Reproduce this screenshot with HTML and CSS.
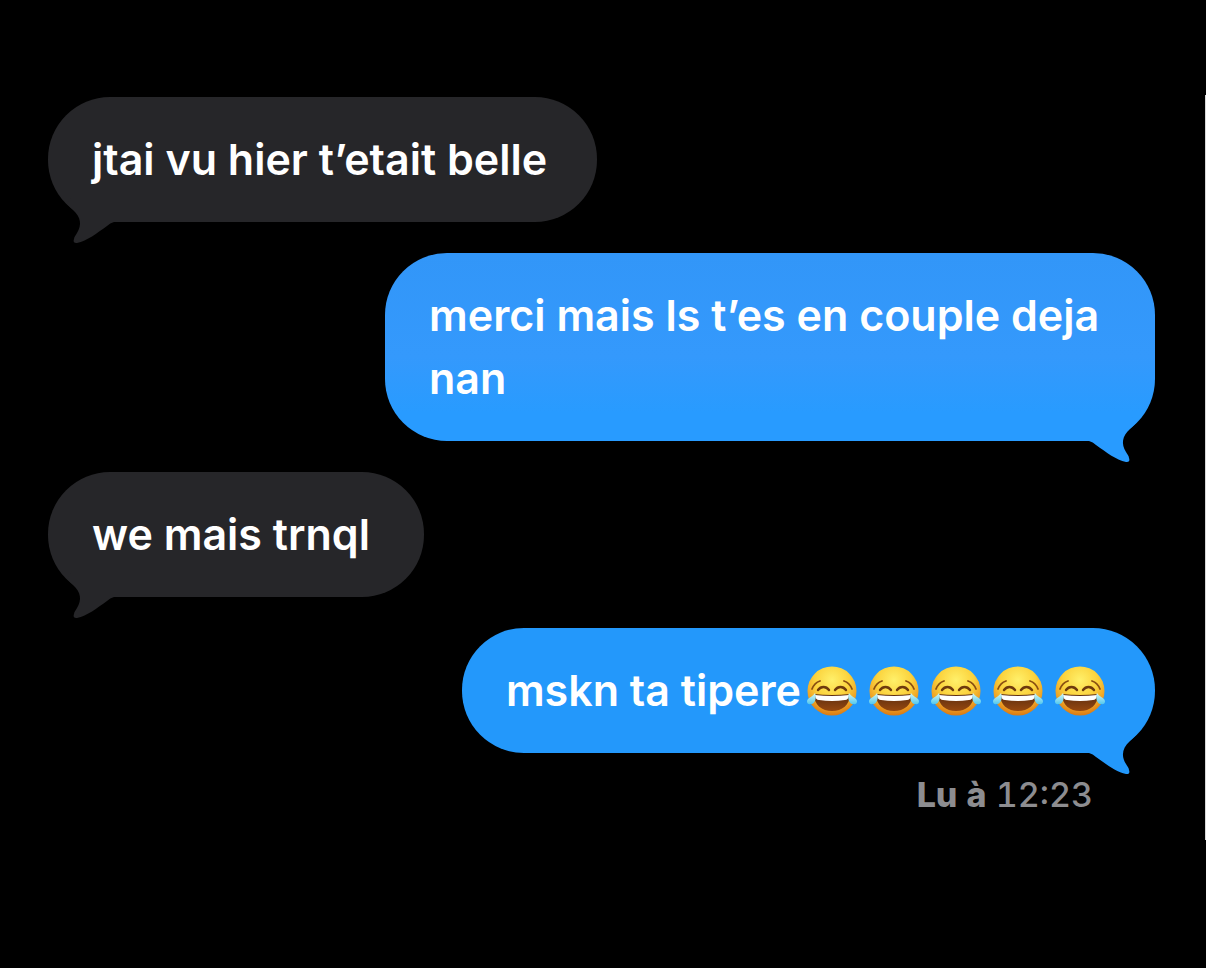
FILE: index.html
```
<!DOCTYPE html>
<html lang="fr">
<head>
<meta charset="utf-8">
<meta name="viewport" content="width=device-width, initial-scale=1">
<title>Messages</title>
<link rel="stylesheet" href="styles.css">
</head>
<body>
<svg class="defs" aria-hidden="true">
  <defs>
    <radialGradient id="face" cx="50%" cy="28%" r="72%">
      <stop offset="0" stop-color="#fff06a"/>
      <stop offset="0.5" stop-color="#fbd23c"/>
      <stop offset="0.8" stop-color="#eea024"/>
      <stop offset="1" stop-color="#d97a14"/>
    </radialGradient>
    <linearGradient id="mouth" x1="0" y1="0" x2="0" y2="1">
      <stop offset="0" stop-color="#5a2c10"/>
      <stop offset="1" stop-color="#96480f"/>
    </linearGradient>
    <linearGradient id="tear" x1="0" y1="0" x2="0" y2="1">
      <stop offset="0" stop-color="#d6f7f2"/>
      <stop offset="1" stop-color="#52c8ee"/>
    </linearGradient>
    <symbol id="tail" viewBox="0 0 70 50">
      <path d="M0 0H46L51 8C49 10 47 12 45 14C37 21 36 29 41 37C42 39 44 41 44 43C45 46 44 47 41 47C31 45 21 37 11 30Q8 27 4 26H0Z"/>
    </symbol>
    <symbol id="joy" viewBox="0 0 50 50">
      <circle cx="25" cy="25" r="24.5" fill="url(#face)"/>
      <path d="M5 23C7 18 10 16 13 15M45 23C43 18 40 16 37 15" fill="none" stroke="#8a4f12" stroke-width="1.8" stroke-linecap="round"/>
      <path d="M11 24C14 20 19 20 22 24M28 24C31 20 36 20 39 24" fill="none" stroke="#6e3a0d" stroke-width="2.4" stroke-linecap="round"/>
      <path d="M7 28Q25 30 43 28C43 39 35 45 25 45S7 39 7 28Z" fill="url(#mouth)"/>
      <path d="M8 29Q25 31 42 29C42 32 40 34 38 34Q25 36 12 34C10 34 8 32 8 29Z" fill="#fff"/>
      <path d="M8 27C10 31 8 38 4 38C0 39-1 35 1 33C3 31 6 30 8 27ZM42 27C40 31 42 38 46 38C50 39 51 35 49 33C47 31 44 30 42 27Z" fill="url(#tear)"/>
    </symbol>
  </defs>
</svg>
<main class="thread">
  <div class="bubble received">
    <p class="text">jtai vu hier t’etait belle</p>
    <svg class="tail" aria-hidden="true"><use href="#tail"/></svg>
  </div>
  <div class="bubble sent tall">
    <p class="text">merci mais ls t’es en couple deja nan</p>
    <svg class="tail" aria-hidden="true"><use href="#tail"/></svg>
  </div>
  <div class="bubble received">
    <p class="text">we mais trnql</p>
    <svg class="tail" aria-hidden="true"><use href="#tail"/></svg>
  </div>
  <div class="bubble sent">
    <p class="text">mskn ta tipere</p>
    <span class="emojis" role="img" aria-label="Cinq visages qui pleurent de rire">
      <svg class="emoji"><use href="#joy"/></svg>
      <svg class="emoji"><use href="#joy"/></svg>
      <svg class="emoji"><use href="#joy"/></svg>
      <svg class="emoji"><use href="#joy"/></svg>
      <svg class="emoji"><use href="#joy"/></svg>
    </span>
    <svg class="tail" aria-hidden="true"><use href="#tail"/></svg>
  </div>
  <p class="status"><strong>Lu à</strong> <time>12:23</time></p>
</main>
</body>
</html>
```
FILE: styles.css
```
* {
  box-sizing: border-box;
}

body {
  margin: 0;
  padding: 95px 0;
  background: #000;
  color: #fff;
  font-family: Inter, "Liberation Sans", sans-serif;
}

.defs {
  position: absolute;
  width: 0;
  height: 0;
}

.thread {
  display: flex;
  flex-direction: column;
  gap: 31px;
  padding: 2px 50px 24px 48px;
  border-right: 1px solid #d8d8d8;
}

.bubble {
  position: relative;
  display: flex;
  align-items: center;
  min-width: 376px;
  max-width: 770px;
  padding: 31px 44px;
  border-radius: 62px;
}

.text {
  margin: 0;
  font-size: 43px;
  font-weight: 600;
  line-height: 63px;
}

.received {
  align-self: flex-start;
  padding-right: 50px;
  background: #262629;
  fill: #262629;
}

.sent {
  align-self: flex-end;
  background: #2398fb;
  fill: #2398fb;
}

.tall {
  background: linear-gradient(#3296f8, #3499fc 55%, #289bff 85%);
  fill: #289bff;
}

.tail {
  position: absolute;
  right: 0;
  bottom: -24px;
  width: 70px;
  height: 50px;
}

.received .tail {
  right: auto;
  left: 0;
  transform: scaleX(-1);
}

.emojis {
  display: flex;
  gap: 12px;
  margin: 0 6px;
}

.emoji {
  width: 50px;
  height: 50px;
}

.status {
  align-self: flex-end;
  margin: -10px 62px 0 0;
  color: #8d8d90;
  font-size: 34px;
  font-weight: 500;
  font-variant-numeric: tabular-nums;
  line-height: 42px;
}

.status strong {
  font-weight: 800;
}
```
